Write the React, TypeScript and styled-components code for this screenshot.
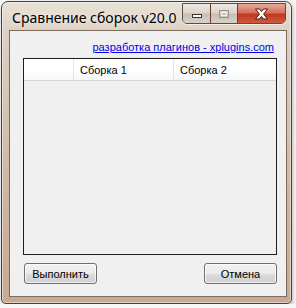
import styled, { createGlobalStyle } from "styled-components";

const GlobalStyle = createGlobalStyle`
  html, body {
    margin: 0;
    padding: 0;
    background: #f7f7f7;
  }
  * {
    box-sizing: border-box;
  }
`;

const Window = styled.div`
  width: 291px;
  height: 303px;
  margin: 1px 0 0 1px;
  display: flex;
  flex-direction: column;
  border: 1px solid #4a403a;
  border-radius: 7px 7px 5px 5px;
  padding: 0 4px 6px 7px;
  background: linear-gradient(
    180deg,
    #eae2d8 0px,
    #ddd1c3 28px,
    #d6c6b5 90px,
    #cdb4a0 200px,
    #c6aa95 100%
  );
  box-shadow: inset 0 0 0 1px rgba(255, 255, 255, 0.45),
    1px 2px 4px rgba(0, 0, 0, 0.25);
`;

const TitleBar = styled.div`
  height: 28px;
  display: flex;
  align-items: flex-start;
  justify-content: space-between;
`;

const Title = styled.div`
  margin: 7px 0 0 3px;
  font-family: "Noto Sans", "Open Sans", sans-serif;
  font-size: 14px;
  line-height: 18px;
  color: #000;
  text-shadow: 0 0 6px rgba(255, 255, 255, 0.9);
`;

const CaptionGroup = styled.div`
  display: flex;
  height: 21px;
  margin-top: 1px;
  margin-right: 1px;
  border: 1px solid #5b4d44;
  border-radius: 0 0 5px 5px;
  overflow: hidden;
  box-shadow: 0 1px 0 rgba(255, 255, 255, 0.6);
`;

const CaptionButton = styled.div<{ $close?: boolean; $width: number }>`
  width: ${(p) => p.$width}px;
  display: flex;
  align-items: center;
  justify-content: center;
  background: ${(p) =>
    p.$close
      ? "linear-gradient(180deg, #e9a99a 0%, #d6705c 45%, #c0391f 55%, #cf5a3c 100%)"
      : "linear-gradient(180deg, #eee8e2 0%, #ddd5cc 45%, #c9bfb4 55%, #d8d0c7 100%)"};
  & + & {
    border-left: 1px solid ${(p) => (p.$close ? "#6d3a2e" : "#8f8378")};
  }
`;

const Client = styled.div`
  flex: 1;
  display: flex;
  flex-direction: column;
  border: 1px solid #7c6c5f;
  background: #f0f0f0;
  padding: 8px 9px 12px 13px;
  font-family: "Liberation Sans", Arial, sans-serif;
  font-size: 11px;
  color: #000;
`;

const LinkRow = styled.div`
  height: 16px;
  margin-bottom: 3px;
  text-align: right;
  padding-right: 3px;
`;

const Link = styled.a`
  color: #0000ee;
  text-decoration: underline;
  line-height: 16px;
`;

const ListView = styled.div`
  flex: 1;
  border: 1px solid #1e1e1e;
  background: #f0f0f0;
  display: flex;
  flex-direction: column;
`;

const Header = styled.div`
  height: 22px;
  display: flex;
  background: linear-gradient(180deg, #ffffff 0%, #ffffff 50%, #f6f7f9 100%);
  border-bottom: 1px solid #d5d5d5;
`;

const HeaderCell = styled.div<{ $width?: number }>`
  ${(p) => (p.$width ? `width: ${p.$width}px;` : "flex: 1;")}
  display: flex;
  align-items: center;
  padding-left: 6px;
  border-right: 1px solid #e3e4e6;
  &:last-child {
    border-right: none;
  }
`;

const ButtonRow = styled.div`
  display: flex;
  justify-content: space-between;
  margin-top: 8px;
  padding-left: 1px;
`;

const Button = styled.button`
  width: 73px;
  height: 21px;
  padding: 0;
  border: 1px solid #707070;
  border-radius: 3px;
  background: linear-gradient(180deg, #f2f2f2 0%, #ebebeb 50%, #dddddd 51%, #cfcfcf 100%);
  box-shadow: inset 0 0 0 1px rgba(255, 255, 255, 0.7);
  font-family: "Liberation Sans", Arial, sans-serif;
  font-size: 11px;
  color: #000;
`;

function MinIcon() {
  return (
    <svg width="12" height="10" viewBox="0 0 12 10">
      <rect x="1.5" y="5.5" width="9" height="3" fill="#fff" stroke="#3d3530" />
    </svg>
  );
}

function MaxIcon() {
  return (
    <svg width="12" height="10" viewBox="0 0 12 10">
      <rect x="1.5" y="1.5" width="9" height="7" fill="none" stroke="#9a9088" />
      <rect x="3.5" y="3.5" width="5" height="3" fill="none" stroke="#f2eee9" />
    </svg>
  );
}

function CloseIcon() {
  return (
    <svg width="15" height="12" viewBox="0 0 15 12">
      <path
        d="M1.5 1 L5.5 1 L7.5 3.6 L9.5 1 L13.5 1 L9.6 6 L13.5 11 L9.5 11 L7.5 8.4 L5.5 11 L1.5 11 L5.4 6 Z"
        fill="#fff"
        stroke="#4a1d13"
        strokeWidth="1"
        strokeLinejoin="round"
      />
    </svg>
  );
}

export default function App() {
  return (
    <>
      <GlobalStyle />
      <Window>
        <TitleBar>
          <Title>Сравнение сборок v20.0</Title>
          <CaptionGroup>
            <CaptionButton $width={27}>
              <MinIcon />
            </CaptionButton>
            <CaptionButton $width={27}>
              <MaxIcon />
            </CaptionButton>
            <CaptionButton $width={48} $close>
              <CloseIcon />
            </CaptionButton>
          </CaptionGroup>
        </TitleBar>
        <Client>
          <LinkRow>
            <Link href="#">разработка плагинов - xplugins.com</Link>
          </LinkRow>
          <ListView>
            <Header>
              <HeaderCell $width={50} />
              <HeaderCell $width={100}>Сборка 1</HeaderCell>
              <HeaderCell>Сборка 2</HeaderCell>
            </Header>
          </ListView>
          <ButtonRow>
            <Button>Выполнить</Button>
            <Button>Отмена</Button>
          </ButtonRow>
        </Client>
      </Window>
    </>
  );
}
